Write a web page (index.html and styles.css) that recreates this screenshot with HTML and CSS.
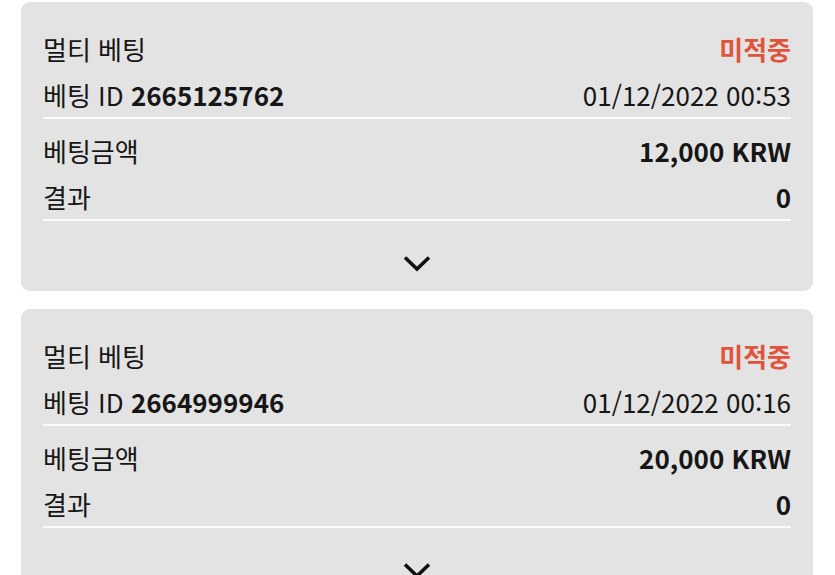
FILE: index.html
```html
<!DOCTYPE html>
<html lang="ko">
<head>
    <meta charset="UTF-8">
    <meta name="viewport" content="width=device-width, initial-scale=1">
    <title>베팅 내역</title>
    <link rel="stylesheet" href="styles.css">
</head>
<body>
    <div class="list">
        <div class="bet-card">
            <div class="bet-head">
                <div class="row">
                    <span>멀티 베팅</span>
                    <span class="status">미적중</span>
                </div>
                <div class="row">
                    <span>베팅 ID <b>2665125762</b></span>
                    <span>01/12/2022 00:53</span>
                </div>
            </div>
            <div class="bet-body">
                <div class="row">
                    <span>베팅금액</span>
                    <b>12,000 KRW</b>
                </div>
                <div class="row">
                    <span>결과</span>
                    <b>0</b>
                </div>
            </div>
            <div class="bet-toggle">
                <svg width="28" height="17" viewBox="0 0 28 17"><path d="M2 2.5 L14 14 L26 2.5" fill="none" stroke="#111" stroke-width="3.6"/></svg>
            </div>
        </div>

        <div class="bet-card">
            <div class="bet-head">
                <div class="row">
                    <span>멀티 베팅</span>
                    <span class="status">미적중</span>
                </div>
                <div class="row">
                    <span>베팅 ID <b>2664999946</b></span>
                    <span>01/12/2022 00:16</span>
                </div>
            </div>
            <div class="bet-body">
                <div class="row">
                    <span>베팅금액</span>
                    <b>20,000 KRW</b>
                </div>
                <div class="row">
                    <span>결과</span>
                    <b>0</b>
                </div>
            </div>
            <div class="bet-toggle">
                <svg width="28" height="17" viewBox="0 0 28 17"><path d="M2 2.5 L14 14 L26 2.5" fill="none" stroke="#111" stroke-width="3.6"/></svg>
            </div>
        </div>
    </div>
</body>
</html>
```

FILE: styles.css
```css
body {
    margin: 0;
    background-color: #fff;
    font-family: "Noto Sans CJK KR", "Noto Sans", sans-serif;
    color: #161616;
    overflow: hidden;
}

.list {
    display: flex;
    flex-direction: column;
    gap: 18px;
    padding: 2px 22px 0 21px;
}

.bet-card {
    background-color: #e3e3e3;
    border-radius: 9px;
    padding: 0 22px;
}

.row {
    display: flex;
    justify-content: space-between;
    align-items: center;
    height: 46px;
    font-size: 26px;
}

.row b {
    font-weight: 700;
}

.status {
    color: #e0543b;
    font-weight: 700;
}

.bet-head {
    padding-top: 23px;
    border-bottom: 2px solid #fafafa;
}

.bet-body {
    padding-top: 8px;
    border-bottom: 2px solid #fafafa;
}

.bet-toggle {
    display: flex;
    justify-content: center;
    padding: 34px 0 19px;
}
```
